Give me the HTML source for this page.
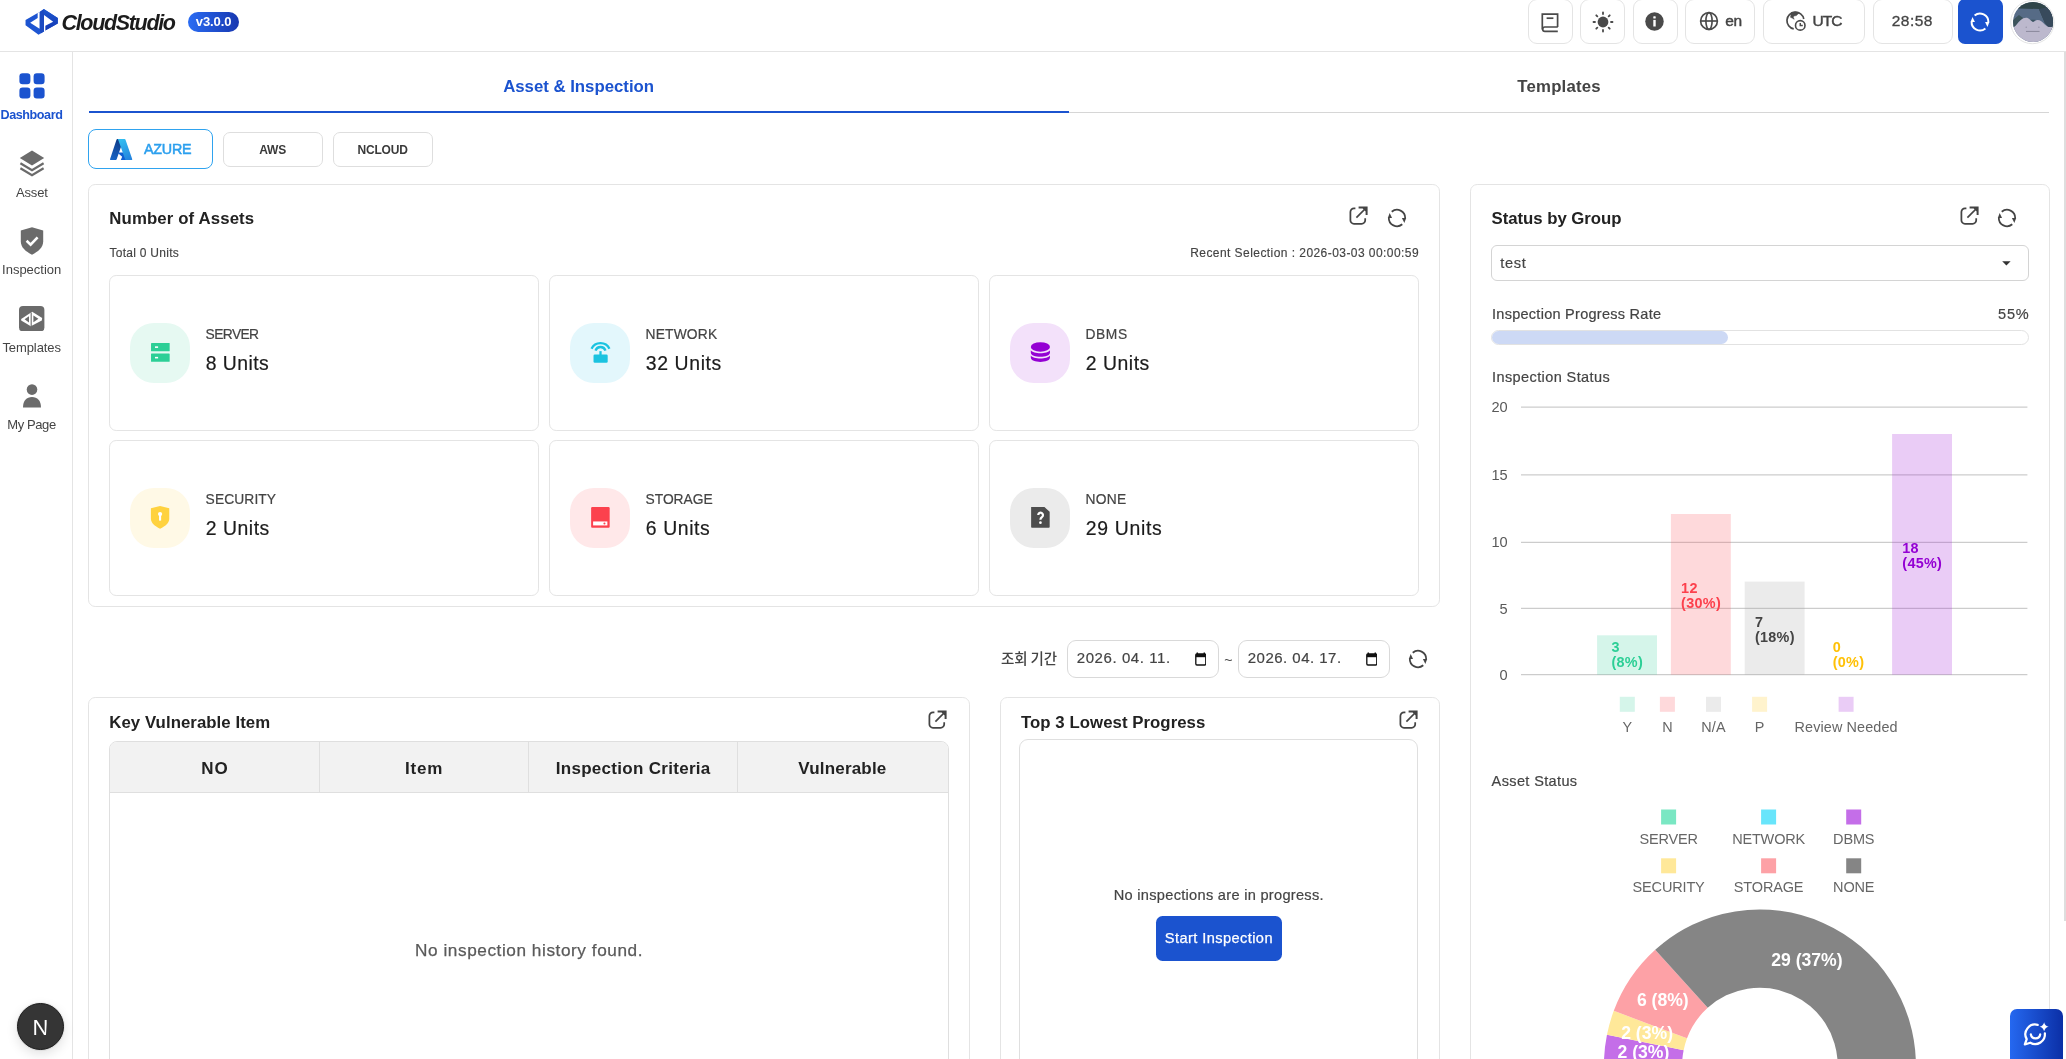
<!DOCTYPE html>
<html lang="en"><head><meta charset="utf-8"><title>CloudStudio Dashboard</title>
<style>
html,body{margin:0;padding:0;background:#fff;}
body{width:2066px;height:1059px;overflow:hidden;position:relative;font-family:"Liberation Sans","Noto Sans CJK KR",sans-serif;}
#root{position:absolute;left:0;top:0;width:2066px;height:1059px;overflow:hidden;will-change:transform;}
.b{position:absolute;box-sizing:border-box;display:block;}
.t{position:absolute;white-space:pre;display:block;}
</style></head><body><div id="root">
<div class="b" style="left:0px;top:51px;width:2066px;height:1px;background:#e4e4e4;"></div>
<svg class="b" style="left:20px;top:4px;" width="50" height="36" viewBox="0 0 1471 1059" preserveAspectRatio="none">
<defs><linearGradient id="lg1" x1="0" y1="0" x2="1" y2="1"><stop offset="0" stop-color="#1b52cf"/><stop offset="1" stop-color="#2058d4"/></linearGradient>
<linearGradient id="lg2" x1="0" y1="0" x2="0" y2="1"><stop offset="0" stop-color="#1d57cf"/><stop offset="1" stop-color="#1438b4"/></linearGradient></defs>
<path d="M700 150 L1112 410 L1112 572 L745 782 L700 812 L545 908 L163 622 L163 474 L520 262 L575 238 Z" fill="url(#lg1)"/>
<path d="M700 150 L1112 410 L1112 572 L745 782 L745 640 L975 520 L705 320Z" fill="url(#lg2)"/>
<path d="M575 242 L700 152 L706 320 L706 812 L610 868 L575 725Z" fill="#1b4ac1"/>
<path d="M520 258 L575 234 L575 725 L300 550 L520 410Z" fill="#fff"/>
<path d="M706 322 L975 520 L745 642 L745 795 L706 818Z" fill="#fff"/>
</svg>
<span class="t" style="left:61.50px;top:10px;font-size:21.5px;line-height:26px;color:#1c1c1c;font-weight:700;font-style:italic;letter-spacing:-1.327px;">CloudStudio</span>
<div class="b" style="left:188px;top:12px;width:51px;height:20px;border-radius:10px;background:linear-gradient(90deg,#2a6cf3,#1737b0);"></div>
<span class="t" style="left:195.80px;top:13px;font-size:13px;line-height:17px;color:#fff;font-weight:700;letter-spacing:-0.110px;">v3.0.0</span>
<div class="b" style="left:1528px;top:-1px;width:45px;height:45px;border:1px solid #e4e4e4;border-radius:9px;background:#fff;"></div>
<div class="b" style="left:1580px;top:-1px;width:45px;height:45px;border:1px solid #e4e4e4;border-radius:9px;background:#fff;"></div>
<div class="b" style="left:1633px;top:-1px;width:45px;height:45px;border:1px solid #e4e4e4;border-radius:9px;background:#fff;"></div>
<div class="b" style="left:1685px;top:-1px;width:70px;height:45px;border:1px solid #e4e4e4;border-radius:9px;background:#fff;"></div>
<div class="b" style="left:1763px;top:-1px;width:102px;height:45px;border:1px solid #e4e4e4;border-radius:9px;background:#fff;"></div>
<div class="b" style="left:1873px;top:-1px;width:80px;height:45px;border:1px solid #e4e4e4;border-radius:9px;background:#fff;"></div>
<div class="b" style="left:1958px;top:-1px;width:45px;height:45px;border-radius:7px;background:#1b53cf;"></div>
<svg class="b" style="left:1540px;top:12px;" width="20" height="21" viewBox="0 0 20 21" preserveAspectRatio="none">
<path d="M2.3 17.6 V2.2 H17.6 V15" fill="none" stroke="#4a4a4a" stroke-width="1.7"/>
<path d="M17.8 15 H4.9 A2.2 2.2 0 0 0 4.9 19.4 H17.8" fill="none" stroke="#4a4a4a" stroke-width="1.7"/>
<path d="M6.6 6.2 H13.4" fill="none" stroke="#4a4a4a" stroke-width="1.7"/>
</svg>
<svg class="b" style="left:1591.7px;top:11.2px;" width="22" height="22" viewBox="0 0 22 22" preserveAspectRatio="none"><circle cx="11" cy="11" r="5.4" fill="#4a4a4a"/><line x1="19.00" y1="11.00" x2="20.50" y2="11.00" stroke="#4a4a4a" stroke-width="1.8" stroke-linecap="round"/><line x1="16.66" y1="16.66" x2="17.72" y2="17.72" stroke="#4a4a4a" stroke-width="1.8" stroke-linecap="round"/><line x1="11.00" y1="19.00" x2="11.00" y2="20.50" stroke="#4a4a4a" stroke-width="1.8" stroke-linecap="round"/><line x1="5.34" y1="16.66" x2="4.28" y2="17.72" stroke="#4a4a4a" stroke-width="1.8" stroke-linecap="round"/><line x1="3.00" y1="11.00" x2="1.50" y2="11.00" stroke="#4a4a4a" stroke-width="1.8" stroke-linecap="round"/><line x1="5.34" y1="5.34" x2="4.28" y2="4.28" stroke="#4a4a4a" stroke-width="1.8" stroke-linecap="round"/><line x1="11.00" y1="3.00" x2="11.00" y2="1.50" stroke="#4a4a4a" stroke-width="1.8" stroke-linecap="round"/><line x1="16.66" y1="5.34" x2="17.72" y2="4.28" stroke="#4a4a4a" stroke-width="1.8" stroke-linecap="round"/></svg>
<svg class="b" style="left:1645.4px;top:12.0px;" width="19" height="19" viewBox="0 0 19 19" preserveAspectRatio="none"><circle cx="9.5" cy="9.5" r="9.25" fill="#4a4a4a"/><rect x="8.3" y="7.9" width="2.4" height="6.6" fill="#fff"/><rect x="8.3" y="4.3" width="2.4" height="2.3" rx=".5" fill="#fff"/></svg>
<svg class="b" style="left:1698.7px;top:11.1px;" width="20" height="20" viewBox="0 0 20 20" preserveAspectRatio="none"><g fill="none" stroke="#4a4a4a" stroke-width="1.65"><circle cx="10" cy="10" r="8.4"/><ellipse cx="10" cy="10" rx="3.1" ry="8.4"/><path d="M1.6 10 H18.4"/></g></svg>
<span class="t" style="left:1725.30px;top:11px;font-size:15.5px;line-height:19px;color:#444;-webkit-text-stroke:0.45px currentColor;letter-spacing:-0.542px;">en</span>
<svg class="b" style="left:1780px;top:6px;" width="32" height="30" viewBox="0 0 32 30" preserveAspectRatio="none"><g fill="none" stroke="#4a4a4a" stroke-width="1.7">
<path d="M13.73 22.93 A8.5 8.5 0 1 1 23.78 12.98"/>
<circle cx="20.25" cy="19.4" r="4.75" stroke-width="1.6"/>
<path d="M20.25 16.9 V19.55 H22.8" stroke-width="1.45"/></g>
<path d="M11.3 6.5 L15.4 5.9 L19.3 6.8 L16.4 9.6 L13.9 9.9 L13.3 11.3 L14.2 13.3 L12.5 12.2 L10.5 11.3 L11 8.5Z" fill="#4a4a4a" stroke="#4a4a4a" stroke-width="0.5" stroke-linejoin="round"/>
</svg>
<span class="t" style="left:1812.60px;top:11px;font-size:15.5px;line-height:19px;color:#444;-webkit-text-stroke:0.45px currentColor;letter-spacing:-1.030px;">UTC</span>
<span class="t" style="left:1891.80px;top:11px;font-size:15.5px;line-height:19px;color:#444;-webkit-text-stroke:0.3px currentColor;letter-spacing:0.453px;">28:58</span>
<svg class="b" style="left:1964.9px;top:7.2px;" width="30" height="30" viewBox="0 0 30 30" preserveAspectRatio="none"><path d="M9.60 8.57 A8.4 8.4 0 0 1 23.39 15.29" fill="none" stroke="#fff" stroke-width="2.0"/><path d="M20.40 21.43 A8.4 8.4 0 0 1 6.61 14.71" fill="none" stroke="#fff" stroke-width="2.0"/><path d="M22.52 20.07 L24.41 15.00 L20.04 15.00Z" fill="#fff"/><path d="M7.48 9.93 L5.59 15.00 L9.96 15.00Z" fill="#fff"/></svg>
<svg class="b" style="left:2004px;top:0px;" width="60" height="48" viewBox="0 0 1324 1059" preserveAspectRatio="none">
<defs><clipPath id="av"><circle cx="641" cy="484" r="441"/></clipPath></defs>
<circle cx="627" cy="487" r="478" fill="#fff" stroke="#e4e4e4" stroke-width="22"/>
<g clip-path="url(#av)"><rect x="150" y="0" width="1000" height="1000" fill="#566b86"/>
<path d="M150 0 H1150 V700 L1000 620 L900 500 L770 200 L330 185 L150 215Z" fill="#2f4549"/>
<path d="M770 200 L1150 120 V700 L1000 620 L900 500Z" fill="#384a5c"/>
<path d="M150 480 L330 330 L430 400 L330 470 L260 580 L150 640Z" fill="#3b5259"/>
<path d="M150 640 L215 600 C280 560 300 500 360 450 C420 395 480 385 530 400 C570 415 600 470 640 482 C680 470 700 440 740 440 C800 440 850 480 900 540 C950 590 1000 610 1070 590 L1150 590 V1000 H150Z" fill="#bcb8cd"/>
<path d="M585 435 L700 435 L640 486Z" fill="#3d5560"/>
<path d="M485 693 H785" stroke="#55556a" stroke-width="11" fill="none"/>
<circle cx="490" cy="600" r="16" fill="#9492a8"/><circle cx="770" cy="600" r="16" fill="#9492a8"/></g>
</svg>
<div class="b" style="left:72px;top:52px;width:1px;height:1007px;background:#e4e4e4;"></div>
<svg class="b" style="left:19px;top:73px;" width="26" height="26" viewBox="0 0 26 26" preserveAspectRatio="none"><rect x="0.4" y="0.3" width="11" height="11" rx="3.2" fill="#1b53cf"/><rect x="0.4" y="14.5" width="11" height="11" rx="3.2" fill="#1b53cf"/><rect x="14.6" y="0.3" width="11" height="11" rx="3.2" fill="#1b53cf"/><rect x="14.6" y="14.5" width="11" height="11" rx="3.2" fill="#1b53cf"/></svg>
<span class="t" style="left:0.50px;top:107px;font-size:12.6px;line-height:16px;color:#1b53cf;font-weight:700;letter-spacing:-0.427px;">Dashboard</span>
<svg class="b" style="left:19px;top:150px;" width="26" height="27" viewBox="0 0 26 27" preserveAspectRatio="none">
<path d="M13 0.6 L25.2 8 L13 15.4 L0.8 8Z" fill="#6b6b6b"/>
<path d="M1.4 13.2 L13 20.2 L24.6 13.2" fill="none" stroke="#6b6b6b" stroke-width="2.2"/>
<path d="M1.4 18.2 L13 25.2 L24.6 18.2" fill="none" stroke="#6b6b6b" stroke-width="2.2"/>
</svg>
<span class="t" style="left:16.00px;top:184px;font-size:13px;line-height:17px;color:#444;letter-spacing:-0.179px;">Asset</span>
<svg class="b" style="left:20px;top:227px;" width="24" height="28" viewBox="0 0 24 28" preserveAspectRatio="none">
<path d="M12 0.3 L23.2 3.6 V14.6 C23.2 20.4 18.4 24.6 12 27.8 C5.6 24.6 0.8 20.4 0.8 14.6 V3.6Z" fill="#6b6b6b"/>
<path d="M6.6 13.8 L10.6 17.6 L17.6 10.4" fill="none" stroke="#fff" stroke-width="2.6"/>
</svg>
<span class="t" style="left:2.05px;top:261px;font-size:13px;line-height:17px;color:#444;">Inspection</span>
<svg class="b" style="left:19.3px;top:306.1px;" width="25.4" height="25.4" viewBox="0 0 25.4 25.4" preserveAspectRatio="none">
<rect x="0" y="0" width="25.4" height="25.4" rx="4" fill="#6b6b6b"/>
<path d="M2.2 13 L13.2 5.7 L23.2 12 L22.8 14.6 L11.8 20.2 L2.2 14.6Z" fill="#fff"/>
<path d="M5.6 13.2 L10 10.2 V16.4Z" fill="#6b6b6b"/>
<path d="M14.4 9.4 L19.4 12.7 L14.4 16.2Z" fill="#6b6b6b"/>
<path d="M12.2 6.4 V19.9" stroke="#6b6b6b" stroke-width="1.1" fill="none"/>
</svg>
<span class="t" style="left:2.45px;top:339px;font-size:13px;line-height:17px;color:#444;letter-spacing:-0.094px;">Templates</span>
<svg class="b" style="left:22px;top:384px;" width="20" height="24" viewBox="0 0 20 24" preserveAspectRatio="none"><circle cx="10" cy="5.6" r="5.3" fill="#6b6b6b"/><path d="M1 23.4 C1 16.6 4.6 13 10 13 C15.4 13 19 16.6 19 23.4Z" fill="#6b6b6b"/></svg>
<span class="t" style="left:7.20px;top:416px;font-size:13px;line-height:17px;color:#444;letter-spacing:-0.384px;">My Page</span>
<div class="b" style="left:17px;top:1003px;width:47px;height:47px;border-radius:50%;background:#353535;border:1.5px solid #1a1a1a;box-shadow:0 0 0 1px rgba(0,0,0,.06),0 4px 12px rgba(0,0,0,.12);"></div>
<span class="t" style="left:32.56px;top:1014px;font-size:22px;line-height:27px;color:#fff;">N</span>
<div class="b" style="left:45.6px;top:1024px;width:4px;height:14px;background:linear-gradient(180deg,rgba(53,53,53,0),#353535 75%);"></div>
<div class="b" style="left:1068px;top:111.9px;width:981px;height:1.2px;background:#d6d6d6;"></div>
<div class="b" style="left:88.8px;top:110.85px;width:980.2px;height:2.25px;background:#1b53cf;"></div>
<span class="t" style="left:503.20px;top:76px;font-size:16.8px;line-height:21px;color:#1b53cf;font-weight:700;letter-spacing:-0.014px;">Asset &amp; Inspection</span>
<span class="t" style="left:1517.25px;top:76px;font-size:16.8px;line-height:21px;color:#444;font-weight:700;letter-spacing:0.206px;">Templates</span>
<div class="b" style="left:88px;top:129px;width:125px;height:40px;border:1.5px solid #2fa3ef;border-radius:8px;background:#fff;"></div>
<svg class="b" style="left:110.4px;top:138.8px;" width="22.4" height="21.1" viewBox="0.6 0.5 22.8 21.9" preserveAspectRatio="none"><defs><linearGradient id="az1" x1="0.6" y1="0" x2="0.3" y2="1"><stop offset="0" stop-color="#0e3a86"/><stop offset="1" stop-color="#1663c4"/></linearGradient><linearGradient id="az2" x1="0.3" y1="0" x2="0.7" y2="1"><stop offset="0" stop-color="#31bdf0"/><stop offset="1" stop-color="#2484de"/></linearGradient></defs><path d="M8.2 0.6 H14.6 L7.4 21.6 a1 1 0 0 1 -1 .7 H1.4 a.7 .7 0 0 1 -.7 -1 L7.2 1.3 a1 1 0 0 1 1 -.7Z" fill="url(#az1)"/><path d="M17.6 14.4 H8 l5 4.6 -1.4 3.3 H22 Z" fill="#0f5fd2"/><path d="M8.6 0.6 H15.4 a1 1 0 0 1 1 .7 L23.2 21.3 a.7 .7 0 0 1 -.7 1 H17 a1 1 0 0 1 -1 -.7 L9.4 2.6Z" fill="url(#az2)"/></svg>
<span class="t" style="left:144.00px;top:140px;font-size:14.3px;line-height:18px;color:#2b9fee;-webkit-text-stroke:0.5px currentColor;letter-spacing:-0.215px;">AZURE</span>
<div class="b" style="left:223px;top:132px;width:100px;height:35px;border:1px solid #dedede;border-radius:7px;background:#fff;"></div>
<span class="t" style="left:259.20px;top:142px;font-size:12px;line-height:16px;color:#3a3a3a;font-weight:700;letter-spacing:-0.170px;">AWS</span>
<div class="b" style="left:333px;top:132px;width:100px;height:35px;border:1px solid #dedede;border-radius:7px;background:#fff;"></div>
<span class="t" style="left:357.45px;top:142px;font-size:12px;line-height:16px;color:#3a3a3a;font-weight:700;letter-spacing:-0.168px;">NCLOUD</span>
<div class="b" style="left:88px;top:184px;width:1352px;height:423px;border:1px solid #e4e4e4;border-radius:7.2px;background:#fff;"></div>
<span class="t" style="left:109.30px;top:208px;font-size:16.8px;line-height:21px;color:#222;font-weight:700;letter-spacing:0.123px;">Number of Assets</span>
<svg class="b" style="left:1348.8px;top:206px;" width="19" height="19" viewBox="0 0 19 19" preserveAspectRatio="none"><g fill="none" stroke="#444" stroke-width="1.75">
<path d="M6.4 2.4 H5 A3.6 3.6 0 0 0 1.4 6 V14.2 A3.6 3.6 0 0 0 5 17.8 H12.6 A3.6 3.6 0 0 0 16.2 14.2 V12.2"/>
<path d="M7.4 11.6 L17 2"/>
</g><path d="M9.6 0.4 H18.6 V9 H16.6 V5.4 L13.6 2.4 H9.6Z" fill="#444"/></svg>
<svg class="b" style="left:1385px;top:206px;" width="24" height="24" viewBox="0 0 24 24" preserveAspectRatio="none"><path d="M6.73 5.72 A8.2 8.2 0 0 1 20.20 12.29" fill="none" stroke="#444" stroke-width="1.75"/><path d="M17.27 18.28 A8.2 8.2 0 0 1 3.80 11.71" fill="none" stroke="#444" stroke-width="1.75"/><path d="M19.34 16.95 L21.18 12.00 L16.92 12.00Z" fill="#444"/><path d="M4.66 7.05 L2.82 12.00 L7.08 12.00Z" fill="#444"/></svg>
<span class="t" style="left:109.50px;top:245px;font-size:12px;line-height:16px;color:#444;-webkit-text-stroke:0.15px currentColor;letter-spacing:0.270px;">Total 0 Units</span>
<span class="t" style="left:1190.20px;top:245px;font-size:12px;line-height:16px;color:#444;-webkit-text-stroke:0.15px currentColor;letter-spacing:0.440px;">Recent Selection : 2026-03-03 00:00:59</span>
<div class="b" style="left:109px;top:275px;width:430px;height:155.7px;border:1px solid #e4e4e4;border-radius:7.2px;background:#fff;"></div>
<div class="b" style="left:130px;top:323px;width:60px;height:60px;border-radius:24px;background:#e6f9f2;"></div>
<svg class="b" style="left:147.6px;top:339.9px;" width="25" height="25" viewBox="0 0 24 24" preserveAspectRatio="none"><g fill="#2ccf96"><rect x="2.9" y="2.8" width="17.9" height="8" rx=".6"/><rect x="2.9" y="12.9" width="17.9" height="8" rx=".6"/></g><rect x="6.7" y="6.1" width="3" height="1.5" fill="#fff"/><rect x="6.7" y="16.2" width="3" height="1.5" fill="#fff"/></svg>
<span class="t" style="left:205.60px;top:326px;font-size:13.8px;line-height:17px;color:#444;-webkit-text-stroke:0.2px currentColor;letter-spacing:-0.600px;">SERVER</span>
<span class="t" style="left:205.80px;top:351px;font-size:19.4px;line-height:24px;color:#1c1c1c;-webkit-text-stroke:0.2px currentColor;letter-spacing:0.437px;">8 Units</span>
<div class="b" style="left:549px;top:275px;width:430px;height:155.7px;border:1px solid #e4e4e4;border-radius:7.2px;background:#fff;"></div>
<div class="b" style="left:570px;top:323px;width:60px;height:60px;border-radius:24px;background:#e3f7fc;"></div>
<svg class="b" style="left:587.6px;top:339.9px;" width="25" height="25" viewBox="0 0 24 24" preserveAspectRatio="none"><g fill="none" stroke="#1bc3e0" stroke-width="2.2"><path d="M3.4 8.5 A9.47 9.47 0 0 1 20.6 8.5"/><path d="M7.2 10.1 A5.1 5.1 0 0 1 16.8 10.1"/><path d="M12 10.7 V14.4"/></g><rect x="5.3" y="13.9" width="13.6" height="7.9" rx="1.2" fill="#1bc3e0"/></svg>
<span class="t" style="left:645.60px;top:326px;font-size:13.8px;line-height:17px;color:#444;-webkit-text-stroke:0.2px currentColor;letter-spacing:0.162px;">NETWORK</span>
<span class="t" style="left:645.80px;top:351px;font-size:19.4px;line-height:24px;color:#1c1c1c;-webkit-text-stroke:0.2px currentColor;letter-spacing:0.619px;">32 Units</span>
<div class="b" style="left:989px;top:275px;width:430px;height:155.7px;border:1px solid #e4e4e4;border-radius:7.2px;background:#fff;"></div>
<div class="b" style="left:1010px;top:323px;width:60px;height:60px;border-radius:24px;background:#f3e1fa;"></div>
<svg class="b" style="left:1027.6px;top:339.9px;" width="25" height="25" viewBox="0 0 24 24" preserveAspectRatio="none"><g fill="#9400d3" transform="translate(-0.1,-0.5)"><ellipse cx="12" cy="7.2" rx="9.2" ry="4.6"/><path d="M2.8 10.4 C5 14.2 19 14.2 21.2 10.4 V12.4 C21.2 18 2.8 18 2.8 12.4Z"/><path d="M2.8 15.4 C5 19.2 19 19.2 21.2 15.4 V17.4 C21.2 23 2.8 23 2.8 17.4Z"/></g></svg>
<span class="t" style="left:1085.60px;top:326px;font-size:13.8px;line-height:17px;color:#444;-webkit-text-stroke:0.2px currentColor;letter-spacing:0.543px;">DBMS</span>
<span class="t" style="left:1085.80px;top:351px;font-size:19.4px;line-height:24px;color:#1c1c1c;-webkit-text-stroke:0.2px currentColor;letter-spacing:0.521px;">2 Units</span>
<div class="b" style="left:109px;top:440px;width:430px;height:155.7px;border:1px solid #e4e4e4;border-radius:7.2px;background:#fff;"></div>
<div class="b" style="left:130px;top:488px;width:60px;height:60px;border-radius:24px;background:#fff9e6;"></div>
<svg class="b" style="left:147.6px;top:504.9px;" width="25" height="25" viewBox="0 0 24 24" preserveAspectRatio="none"><path d="M11.6 1 L20.4 3 V13.2 C20.4 17 17 20 11.6 22.9 C6.2 20 2.8 17 2.8 13.2 V3Z" fill="#ffd23f"/><circle cx="11.6" cy="8.7" r="2" fill="#fff"/><rect x="10.6" y="9.3" width="2" height="5.7" fill="#fff"/></svg>
<span class="t" style="left:205.60px;top:491px;font-size:13.8px;line-height:17px;color:#444;-webkit-text-stroke:0.2px currentColor;letter-spacing:0.103px;">SECURITY</span>
<span class="t" style="left:205.80px;top:516px;font-size:19.4px;line-height:24px;color:#1c1c1c;-webkit-text-stroke:0.2px currentColor;letter-spacing:0.521px;">2 Units</span>
<div class="b" style="left:549px;top:440px;width:430px;height:155.7px;border:1px solid #e4e4e4;border-radius:7.2px;background:#fff;"></div>
<div class="b" style="left:570px;top:488px;width:60px;height:60px;border-radius:24px;background:#ffe8e9;"></div>
<svg class="b" style="left:587.6px;top:504.9px;" width="25" height="25" viewBox="0 0 24 24" preserveAspectRatio="none"><rect x="3" y="2" width="17.8" height="19.9" rx="1" fill="#fc414d"/><rect x="4.9" y="15.8" width="13.7" height="3.8" fill="#fff"/><circle cx="15.8" cy="17.7" r="1" fill="#fc414d"/></svg>
<span class="t" style="left:645.60px;top:491px;font-size:13.8px;line-height:17px;color:#444;-webkit-text-stroke:0.2px currentColor;letter-spacing:-0.038px;">STORAGE</span>
<span class="t" style="left:645.80px;top:516px;font-size:19.4px;line-height:24px;color:#1c1c1c;-webkit-text-stroke:0.2px currentColor;letter-spacing:0.604px;">6 Units</span>
<div class="b" style="left:989px;top:440px;width:430px;height:155.7px;border:1px solid #e4e4e4;border-radius:7.2px;background:#fff;"></div>
<div class="b" style="left:1010px;top:488px;width:60px;height:60px;border-radius:24px;background:#ebebeb;"></div>
<svg class="b" style="left:1027.6px;top:504.9px;" width="25" height="25" viewBox="0 0 24 24" preserveAspectRatio="none"><path d="M3 2 H15.8 L20.8 6.6 V21.1 a.8 .8 0 0 1 -.8 .8 H3.8 a.8 .8 0 0 1 -.8 -.8Z" fill="#4d4d4d"/><path d="M9.8 9.6 A2.3 2.3 0 1 1 13.5 11.5 C12.3 12.3 11.9 12.7 11.9 14.2" fill="none" stroke="#fff" stroke-width="2.1"/><circle cx="11.95" cy="17" r="1.3" fill="#fff"/></svg>
<span class="t" style="left:1085.60px;top:491px;font-size:13.8px;line-height:17px;color:#444;-webkit-text-stroke:0.2px currentColor;letter-spacing:0.210px;">NONE</span>
<span class="t" style="left:1085.80px;top:516px;font-size:19.4px;line-height:24px;color:#1c1c1c;-webkit-text-stroke:0.2px currentColor;letter-spacing:0.691px;">29 Units</span>
<span class="t" style="left:1001px;top:647px;font-size:14.5px;line-height:22px;color:#444;font-weight:500;word-spacing:-0.5px;font-family:'Noto Sans CJK KR','Liberation Sans',sans-serif;">조회 기간</span>
<div class="b" style="left:1067px;top:640px;width:152px;height:38px;border:1px solid #d9d9d9;border-radius:9px;background:#fff;"></div>
<span class="t" style="left:1076.80px;top:648px;font-size:15px;line-height:19px;color:#444;-webkit-text-stroke:0.2px currentColor;letter-spacing:0.569px;">2026. 04. 11.</span>
<svg class="b" style="left:1194.7px;top:651.8px;" width="11.6" height="14" viewBox="0 0 13 14" preserveAspectRatio="none"><path d="M2.6 0.4 V2 M10.4 0.4 V2" stroke="#111" stroke-width="1.6"/><rect x="0.9" y="2" width="11.2" height="11" rx="1.2" fill="none" stroke="#111" stroke-width="1.5"/><rect x="0.9" y="2" width="11.2" height="3.2" fill="#111"/></svg>
<span class="t" style="left:1224.21px;top:651px;font-size:14px;line-height:18px;color:#444;">~</span>
<div class="b" style="left:1238px;top:640px;width:152px;height:38px;border:1px solid #d9d9d9;border-radius:9px;background:#fff;"></div>
<span class="t" style="left:1247.80px;top:648px;font-size:15px;line-height:19px;color:#444;-webkit-text-stroke:0.2px currentColor;letter-spacing:0.476px;">2026. 04. 17.</span>
<svg class="b" style="left:1365.7px;top:651.8px;" width="11.6" height="14" viewBox="0 0 13 14" preserveAspectRatio="none"><path d="M2.6 0.4 V2 M10.4 0.4 V2" stroke="#111" stroke-width="1.6"/><rect x="0.9" y="2" width="11.2" height="11" rx="1.2" fill="none" stroke="#111" stroke-width="1.5"/><rect x="0.9" y="2" width="11.2" height="3.2" fill="#111"/></svg>
<svg class="b" style="left:1406px;top:647px;" width="24" height="24" viewBox="0 0 24 24" preserveAspectRatio="none"><path d="M6.73 5.72 A8.2 8.2 0 0 1 20.20 12.29" fill="none" stroke="#444" stroke-width="1.75"/><path d="M17.27 18.28 A8.2 8.2 0 0 1 3.80 11.71" fill="none" stroke="#444" stroke-width="1.75"/><path d="M19.34 16.95 L21.18 12.00 L16.92 12.00Z" fill="#444"/><path d="M4.66 7.05 L2.82 12.00 L7.08 12.00Z" fill="#444"/></svg>
<div class="b" style="left:88px;top:697px;width:882px;height:400px;border:1px solid #e4e4e4;border-radius:7.2px;background:#fff;"></div>
<span class="t" style="left:109.30px;top:712px;font-size:16.8px;line-height:21px;color:#222;font-weight:700;letter-spacing:0.057px;">Key Vulnerable Item</span>
<svg class="b" style="left:927.8000000000001px;top:710.3px;" width="19" height="19" viewBox="0 0 19 19" preserveAspectRatio="none"><g fill="none" stroke="#444" stroke-width="1.75">
<path d="M6.4 2.4 H5 A3.6 3.6 0 0 0 1.4 6 V14.2 A3.6 3.6 0 0 0 5 17.8 H12.6 A3.6 3.6 0 0 0 16.2 14.2 V12.2"/>
<path d="M7.4 11.6 L17 2"/>
</g><path d="M9.6 0.4 H18.6 V9 H16.6 V5.4 L13.6 2.4 H9.6Z" fill="#444"/></svg>
<div class="b" style="left:109px;top:741px;width:840px;height:400px;border:1px solid #dfdfdf;border-radius:8px 8px 0 0;background:#fff;"></div>
<div class="b" style="left:110px;top:742px;width:838px;height:50px;background:#f2f2f2;border-radius:7px 7px 0 0;"></div>
<div class="b" style="left:110px;top:792px;width:838px;height:1px;background:#dfdfdf;"></div>
<div class="b" style="left:319px;top:742px;width:1px;height:50px;background:#dfdfdf;"></div>
<div class="b" style="left:528px;top:742px;width:1px;height:50px;background:#dfdfdf;"></div>
<div class="b" style="left:737px;top:742px;width:1px;height:50px;background:#dfdfdf;"></div>
<span class="t" style="left:201.15px;top:758px;font-size:17px;line-height:21px;color:#222;font-weight:700;letter-spacing:1.000px;">NO</span>
<span class="t" style="left:404.95px;top:758px;font-size:17px;line-height:21px;color:#222;font-weight:700;letter-spacing:0.849px;">Item</span>
<span class="t" style="left:555.75px;top:758px;font-size:17px;line-height:21px;color:#222;font-weight:700;letter-spacing:0.292px;">Inspection Criteria</span>
<span class="t" style="left:798.30px;top:758px;font-size:17px;line-height:21px;color:#222;font-weight:700;letter-spacing:0.191px;">Vulnerable</span>
<span class="t" style="left:415.05px;top:939px;font-size:17.2px;line-height:22px;color:#5a5a5a;-webkit-text-stroke:0.25px currentColor;letter-spacing:0.565px;">No inspection history found.</span>
<div class="b" style="left:1000px;top:697px;width:440px;height:400px;border:1px solid #e4e4e4;border-radius:7.2px;background:#fff;"></div>
<span class="t" style="left:1021.00px;top:712px;font-size:16.8px;line-height:21px;color:#222;font-weight:700;letter-spacing:0.046px;">Top 3 Lowest Progress</span>
<svg class="b" style="left:1398.8px;top:710.3px;" width="19" height="19" viewBox="0 0 19 19" preserveAspectRatio="none"><g fill="none" stroke="#444" stroke-width="1.75">
<path d="M6.4 2.4 H5 A3.6 3.6 0 0 0 1.4 6 V14.2 A3.6 3.6 0 0 0 5 17.8 H12.6 A3.6 3.6 0 0 0 16.2 14.2 V12.2"/>
<path d="M7.4 11.6 L17 2"/>
</g><path d="M9.6 0.4 H18.6 V9 H16.6 V5.4 L13.6 2.4 H9.6Z" fill="#444"/></svg>
<div class="b" style="left:1019px;top:739px;width:399px;height:400px;border:1px solid #dfdfdf;border-radius:9px;background:#fff;"></div>
<span class="t" style="left:1113.75px;top:886px;font-size:14.6px;line-height:18px;color:#444;-webkit-text-stroke:0.2px currentColor;letter-spacing:0.289px;">No inspections are in progress.</span>
<div class="b" style="left:1156px;top:916px;width:126.2px;height:45px;border-radius:6.5px;background:#1b53cf;"></div>
<span class="t" style="left:1164.85px;top:929px;font-size:14.6px;line-height:18px;color:#fff;-webkit-text-stroke:0.25px currentColor;letter-spacing:0.418px;">Start Inspection</span>
<div class="b" style="left:1470px;top:184px;width:580px;height:900px;border:1px solid #e4e4e4;border-radius:7.2px;background:#fff;"></div>
<span class="t" style="left:1491.60px;top:208px;font-size:16.8px;line-height:21px;color:#222;font-weight:700;letter-spacing:-0.048px;">Status by Group</span>
<svg class="b" style="left:1959.5px;top:206px;" width="19" height="19" viewBox="0 0 19 19" preserveAspectRatio="none"><g fill="none" stroke="#444" stroke-width="1.75">
<path d="M6.4 2.4 H5 A3.6 3.6 0 0 0 1.4 6 V14.2 A3.6 3.6 0 0 0 5 17.8 H12.6 A3.6 3.6 0 0 0 16.2 14.2 V12.2"/>
<path d="M7.4 11.6 L17 2"/>
</g><path d="M9.6 0.4 H18.6 V9 H16.6 V5.4 L13.6 2.4 H9.6Z" fill="#444"/></svg>
<svg class="b" style="left:1994.9px;top:206px;" width="24" height="24" viewBox="0 0 24 24" preserveAspectRatio="none"><path d="M6.73 5.72 A8.2 8.2 0 0 1 20.20 12.29" fill="none" stroke="#444" stroke-width="1.75"/><path d="M17.27 18.28 A8.2 8.2 0 0 1 3.80 11.71" fill="none" stroke="#444" stroke-width="1.75"/><path d="M19.34 16.95 L21.18 12.00 L16.92 12.00Z" fill="#444"/><path d="M4.66 7.05 L2.82 12.00 L7.08 12.00Z" fill="#444"/></svg>
<div class="b" style="left:1491px;top:245px;width:538px;height:36px;border:1px solid #d4d4d4;border-radius:6px;background:#fff;"></div>
<span class="t" style="left:1500.20px;top:254px;font-size:14.6px;line-height:18px;color:#444;-webkit-text-stroke:0.2px currentColor;letter-spacing:0.691px;">test</span>
<svg class="b" style="left:2002.4px;top:261.3px;" width="9" height="5" viewBox="0 0 9 5" preserveAspectRatio="none"><path d="M0.2 0.2 H8.6 L4.4 4.6Z" fill="#333"/></svg>
<span class="t" style="left:1492.00px;top:305px;font-size:14.5px;line-height:18px;color:#444;-webkit-text-stroke:0.2px currentColor;letter-spacing:0.270px;">Inspection Progress Rate</span>
<span class="t" style="left:1998.10px;top:305px;font-size:14.5px;line-height:18px;color:#444;-webkit-text-stroke:0.2px currentColor;letter-spacing:0.790px;">55%</span>
<div class="b" style="left:1491px;top:330px;width:538px;height:15px;border:1px solid #e2e2e2;border-radius:8px;background:#fff;"></div>
<div class="b" style="left:1491.5px;top:331px;width:236.5px;height:13px;border-radius:7px;background:#cdd9f5;"></div>
<span class="t" style="left:1492.00px;top:368px;font-size:14.5px;line-height:18px;color:#444;-webkit-text-stroke:0.2px currentColor;letter-spacing:0.405px;">Inspection Status</span>
<svg class="b" style="left:0;top:0;font-family:'Liberation Sans',sans-serif;" width="2066" height="1059" viewBox="0 0 2066 1059"><text x="1507.7" y="680.2" text-anchor="end" font-size="14.6" fill="#595959">0</text><text x="1507.7" y="613.5" text-anchor="end" font-size="14.6" fill="#595959">5</text><text x="1507.7" y="547.0" text-anchor="end" font-size="14.6" fill="#595959">10</text><text x="1507.7" y="479.5" text-anchor="end" font-size="14.6" fill="#595959">15</text><text x="1507.7" y="411.7" text-anchor="end" font-size="14.6" fill="#595959">20</text><line x1="1521" y1="674.7" x2="2027.4" y2="674.7" stroke="#000" stroke-opacity="0.2" stroke-width="1.2"/><line x1="1521" y1="608.4" x2="2027.4" y2="608.4" stroke="#000" stroke-opacity="0.2" stroke-width="1.2"/><line x1="1521" y1="542.3" x2="2027.4" y2="542.3" stroke="#000" stroke-opacity="0.2" stroke-width="1.2"/><line x1="1521" y1="474.8" x2="2027.4" y2="474.8" stroke="#000" stroke-opacity="0.2" stroke-width="1.2"/><line x1="1521" y1="407.1" x2="2027.4" y2="407.1" stroke="#000" stroke-opacity="0.2" stroke-width="1.2"/><rect x="1597.1" y="635.3" width="59.9" height="39.4" fill="rgba(45,207,150,0.2)"/><text x="1611.4" y="652.2" font-size="14.4" font-weight="700" letter-spacing="0.3" fill="#2ccf96">3</text><text x="1611.4" y="667.3" font-size="14.4" font-weight="700" letter-spacing="0.3" fill="#2ccf96">(8%)</text><rect x="1670.9" y="514.0" width="59.9" height="160.7" fill="rgba(252,65,77,0.2)"/><text x="1681.1" y="593.3" font-size="14.4" font-weight="700" letter-spacing="0.3" fill="#fc414d">12</text><text x="1681.1" y="608.4" font-size="14.4" font-weight="700" letter-spacing="0.3" fill="#fc414d">(30%)</text><rect x="1744.7" y="581.6" width="59.9" height="93.1" fill="rgba(153,153,153,0.2)"/><text x="1754.9" y="627.1" font-size="14.4" font-weight="700" letter-spacing="0.3" fill="#444">7</text><text x="1754.9" y="642.2" font-size="14.4" font-weight="700" letter-spacing="0.3" fill="#444">(18%)</text><text x="1832.7" y="652.2" font-size="14.4" font-weight="700" letter-spacing="0.3" fill="#ffc107">0</text><text x="1832.7" y="667.3" font-size="14.4" font-weight="700" letter-spacing="0.3" fill="#ffc107">(0%)</text><rect x="1892.1" y="434.0" width="59.9" height="240.7" fill="rgba(148,0,211,0.2)"/><text x="1902.3" y="553.3" font-size="14.4" font-weight="700" letter-spacing="0.3" fill="#9400d3">18</text><text x="1902.3" y="568.4" font-size="14.4" font-weight="700" letter-spacing="0.3" fill="#9400d3">(45%)</text><rect x="1619.8" y="696.8" width="15" height="15" fill="rgba(45,207,150,0.2)"/><text x="1627.3" y="731.6" text-anchor="middle" font-size="14.4" letter-spacing="0.12" fill="#666">Y</text><rect x="1659.9" y="696.8" width="15" height="15" fill="rgba(252,65,77,0.2)"/><text x="1667.4" y="731.6" text-anchor="middle" font-size="14.4" letter-spacing="0.12" fill="#666">N</text><rect x="1706.0" y="696.8" width="15" height="15" fill="rgba(153,153,153,0.2)"/><text x="1713.5" y="731.6" text-anchor="middle" font-size="14.4" letter-spacing="0.12" fill="#666">N/A</text><rect x="1752.1" y="696.8" width="15" height="15" fill="rgba(255,193,7,0.2)"/><text x="1759.6" y="731.6" text-anchor="middle" font-size="14.4" letter-spacing="0.12" fill="#666">P</text><rect x="1838.6" y="696.8" width="15" height="15" fill="rgba(148,0,211,0.2)"/><text x="1846.1" y="731.6" text-anchor="middle" font-size="14.4" letter-spacing="0.12" fill="#666">Review Needed</text></svg>
<span class="t" style="left:1491.60px;top:772px;font-size:14.5px;line-height:18px;color:#444;-webkit-text-stroke:0.2px currentColor;letter-spacing:0.374px;">Asset Status</span>
<svg class="b" style="left:0;top:0;font-family:'Liberation Sans',sans-serif;" width="2066" height="1059" viewBox="0 0 2066 1059"><rect x="1661.1" y="809.5" width="15" height="15" fill="#7ae7c3"/><text x="1668.6" y="844.2" text-anchor="middle" font-size="14.5" letter-spacing="-0.17" fill="#666">SERVER</text><rect x="1761.1" y="809.5" width="15" height="15" fill="#68e5fb"/><text x="1768.6" y="844.2" text-anchor="middle" font-size="14.5" letter-spacing="-0.17" fill="#666">NETWORK</text><rect x="1846.2" y="809.5" width="15" height="15" fill="#c46ee8"/><text x="1853.7" y="844.2" text-anchor="middle" font-size="14.5" letter-spacing="-0.17" fill="#666">DBMS</text><rect x="1661.1" y="858.3" width="15" height="15" fill="#ffe899"/><text x="1668.6" y="892.1" text-anchor="middle" font-size="14.5" letter-spacing="-0.17" fill="#666">SECURITY</text><rect x="1761.1" y="858.3" width="15" height="15" fill="#fda1a6"/><text x="1768.6" y="892.1" text-anchor="middle" font-size="14.5" letter-spacing="-0.17" fill="#666">STORAGE</text><rect x="1846.2" y="858.3" width="15" height="15" fill="#858585"/><text x="1853.7" y="892.1" text-anchor="middle" font-size="14.5" letter-spacing="-0.17" fill="#666">NONE</text><path d="M1915.90 1065.50 A156.0 156.0 0 0 1 1885.37 1158.20 L1822.48 1111.73 A77.8 77.8 0 0 0 1837.70 1065.50Z" fill="#7ae7c3"/><path d="M1885.37 1158.20 A156.0 156.0 0 0 1 1604.02 1059.30 L1682.16 1062.41 A77.8 77.8 0 0 0 1822.48 1111.73Z" fill="#68e5fb"/><path d="M1604.02 1059.30 A156.0 156.0 0 0 1 1606.97 1034.69 L1683.63 1050.13 A77.8 77.8 0 0 0 1682.16 1062.41Z" fill="#c46ee8"/><path d="M1606.97 1034.69 A156.0 156.0 0 0 1 1613.79 1010.85 L1687.03 1038.25 A77.8 77.8 0 0 0 1683.63 1050.13Z" fill="#ffe899"/><path d="M1613.79 1010.85 A156.0 156.0 0 0 1 1655.21 949.85 L1707.69 1007.82 A77.8 77.8 0 0 0 1687.03 1038.25Z" fill="#fda1a6"/><path d="M1655.21 949.85 A156.0 156.0 0 0 1 1915.90 1065.50 L1837.70 1065.50 A77.8 77.8 0 0 0 1707.69 1007.82Z" fill="#858585"/><text x="1870.5" y="1108.1" text-anchor="middle" font-size="17.6" font-weight="700" fill="#fff">8 (10%)</text><text x="1720.7" y="1181.8" text-anchor="middle" font-size="17.6" font-weight="700" fill="#fff">32 (41%)</text><text x="1643.4" y="1057.6" text-anchor="middle" font-size="17.6" font-weight="700" fill="#fff">2 (3%)</text><text x="1647.1" y="1039.4" text-anchor="middle" font-size="17.6" font-weight="700" fill="#fff">2 (3%)</text><text x="1662.8" y="1005.8" text-anchor="middle" font-size="17.6" font-weight="700" fill="#fff">6 (8%)</text><text x="1806.9" y="966.0" text-anchor="middle" font-size="17.6" font-weight="700" fill="#fff">29 (37%)</text></svg>
<div class="b" style="left:2064.2px;top:52px;width:2px;height:868.6px;background:#dedede;"></div>
<div class="b" style="left:2010px;top:1009px;width:53px;height:60px;border-radius:7px;background:linear-gradient(90deg,#2568f0,#0b2fa6);"></div>
<svg class="b" style="left:2004px;top:1000px;" width="62" height="59" viewBox="0 0 1113 1059" preserveAspectRatio="none"><g fill="none" stroke="#fff" stroke-width="40" stroke-linecap="round" stroke-linejoin="round">
<path d="M605 446 A175 175 0 0 0 408 702 L374 798 L472 767 A175 175 0 0 0 734 600"/>
<path d="M482 618 A85 85 0 0 0 650 618"/></g>
<path d="M720 398 Q735 465 802 480 Q735 495 720 562 Q705 495 638 480 Q705 465 720 398Z" fill="#fff"/></svg>
</div></body></html>
